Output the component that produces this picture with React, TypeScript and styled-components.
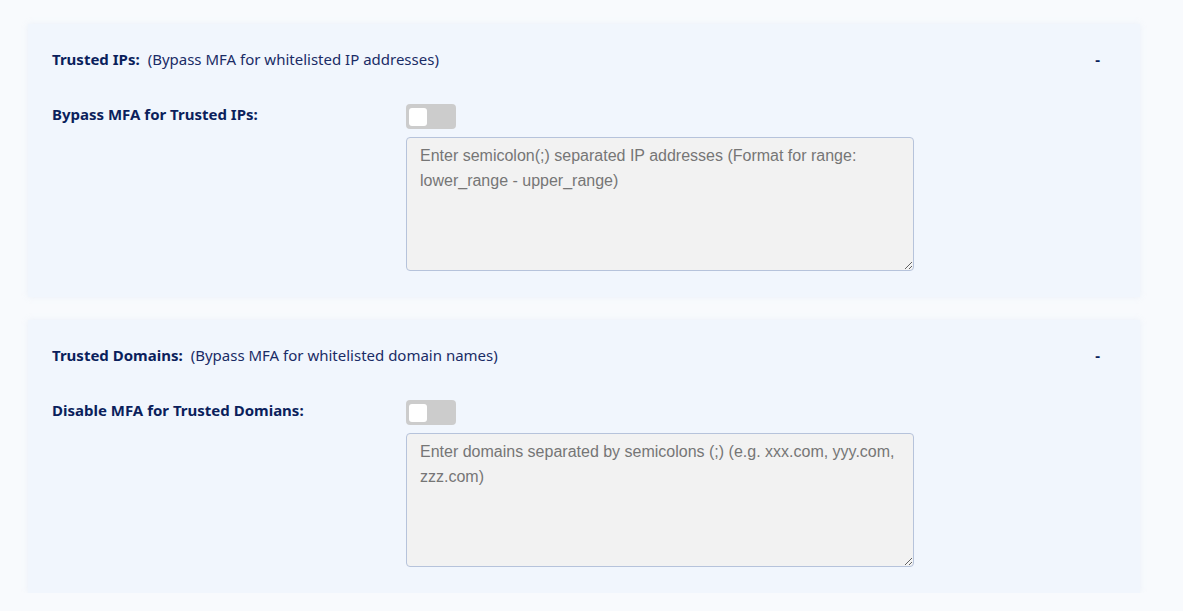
import React from "react";
import styled, { createGlobalStyle } from "styled-components";

const Global = createGlobalStyle`
  html, body { margin: 0; padding: 0; background: #f8fafd; }
  body { font-family: "Noto Sans", "Open Sans", sans-serif; }
`;

const Page = styled.div`
  padding: 24px 43px 0 28px;
  display: flex;
  flex-direction: column;
  gap: 23px;
`;

const Card = styled.section`
  background: #f1f6fd;
  box-shadow: 0 0 6px rgba(200, 215, 235, 0.25);
  padding: 24px 40px 26px 24px;
  display: flex;
  flex-direction: column;
`;

const Header = styled.div`
  display: flex;
  justify-content: space-between;
  align-items: center;
  height: 22px;
  color: #0b1f5c;
  font-size: 15px;
`;

const Title = styled.div`
  display: flex;
  gap: 8px;
  align-items: baseline;
`;

const Strong = styled.span`
  font-weight: 700;
`;

const Note = styled.span`
  color: #1a2c66;
`;

const Dash = styled.span`
  font-weight: 700;
  font-size: 15px;
`;

const Row = styled.div`
  display: grid;
  grid-template-columns: 354px 508px;
  margin-top: 34px;
`;

const Label = styled.div`
  font-weight: 700;
  font-size: 15px;
  color: #0b1f5c;
  padding-top: 0px;
`;

const Controls = styled.div`
  display: flex;
  flex-direction: column;
  gap: 8px;
  align-items: flex-start;
`;

const Switch = styled.button`
  width: 50px;
  height: 25px;
  border: none;
  border-radius: 4px;
  background: #cccccc;
  padding: 0 3px;
  display: flex;
  align-items: center;
  cursor: pointer;
  &::before {
    content: "";
    width: 18px;
    height: 18px;
    border-radius: 3px;
    background: #ffffff;
  }
`;

const Area = styled.textarea`
  box-sizing: border-box;
  width: 508px;
  height: 134px;
  background: #f2f2f2;
  border: 1px solid #b6c3db;
  border-radius: 4px;
  padding: 5px 13px;
  font-family: "Liberation Sans", Arial, sans-serif;
  font-size: 16px;
  line-height: 25px;
  color: #333;
  resize: vertical;
  &::placeholder {
    color: #767676;
  }
`;

type Section = {
  title: string;
  note: string;
  label: string;
  placeholder: string;
};

const sections: Section[] = [
  {
    title: "Trusted IPs:",
    note: "(Bypass MFA for whitelisted IP addresses)",
    label: "Bypass MFA for Trusted IPs:",
    placeholder:
      "Enter semicolon(;) separated IP addresses (Format for range: lower_range - upper_range)",
  },
  {
    title: "Trusted Domains:",
    note: "(Bypass MFA for whitelisted domain names)",
    label: "Disable MFA for Trusted Domians:",
    placeholder:
      "Enter domains separated by semicolons (;) (e.g. xxx.com, yyy.com, zzz.com)",
  },
];

export default function App() {
  return (
    <>
      <Global />
      <Page>
        {sections.map((s) => (
          <Card key={s.title}>
            <Header>
              <Title>
                <Strong>{s.title}</Strong>
                <Note>{s.note}</Note>
              </Title>
              <Dash>-</Dash>
            </Header>
            <Row>
              <Label>{s.label}</Label>
              <Controls>
                <Switch aria-label={s.label} />
                <Area placeholder={s.placeholder} />
              </Controls>
            </Row>
          </Card>
        ))}
      </Page>
    </>
  );
}
